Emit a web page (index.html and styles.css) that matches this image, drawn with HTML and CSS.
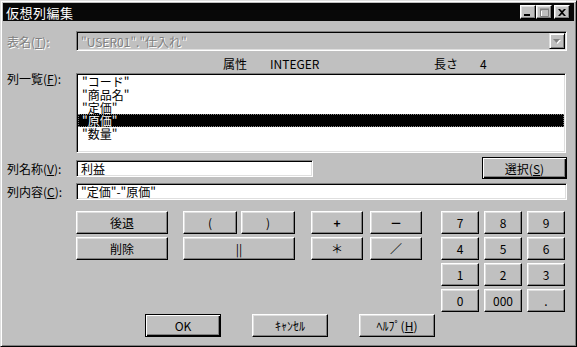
FILE: index.html
```html
<!DOCTYPE html>
<html lang="ja">
<head>
    <meta charset="UTF-8">
    <title>仮想列編集</title>
    <link rel="stylesheet" href="styles.css">
</head>
<body>
    <div class="window">
        <div class="titlebar">
            <span class="title">仮想列編集</span>
            <div class="caption-buttons">
                <span class="cap-btn">
                    <svg width="8" height="7" viewBox="0 0 8 7"><rect x="0" y="5" width="6" height="2" fill="#000"/></svg>
                </span>
                <span class="cap-btn cap-max">
                    <svg width="9" height="9" viewBox="0 0 9 9">
                        <path d="M1.5 2.5 h8 v7 h-8 z" fill="none" stroke="#fff"/>
                        <path d="M0.5 1.5 h8 v7 h-8 z M0 1 h9 v1 h-9z" fill="none" stroke="#808080"/>
                    </svg>
                </span>
                <span class="cap-btn cap-close">
                    <svg width="8" height="7" viewBox="0 0 8 7">
                        <path d="M0 0 h2 l2 2 l2 -2 h2 l-3 3.5 l3 3.5 h-2 l-2 -2 l-2 2 h-2 l3 -3.5 z" fill="#000"/>
                    </svg>
                </span>
            </div>
        </div>

        <div class="content">
            <div class="row row-table">
                <label class="label disabled">表名(<u>T</u>):</label>
                <div class="combo">
                    <span class="combo-text">"USER01"."仕入れ"</span>
                    <span class="combo-btn">
                        <svg width="8" height="5" viewBox="0 0 8 5">
                            <path d="M1 1 h7 l-3.5 4 z" fill="#fff"/>
                            <path d="M0 0 h7 l-3.5 4 z" fill="#808080"/>
                        </svg>
                    </span>
                </div>
            </div>

            <div class="info">
                <span class="info-attr">属性</span>
                <span class="info-type">INTEGER</span>
                <span class="info-len">長さ</span>
                <span>4</span>
            </div>

            <div class="row row-list">
                <label class="label">列一覧(<u>F</u>):</label>
                <ul class="listbox">
                    <li>"コード"</li>
                    <li>"商品名"</li>
                    <li>"定価"</li>
                    <li class="selected">"原価"</li>
                    <li>"数量"</li>
                </ul>
            </div>

            <div class="row row-name">
                <label class="label">列名称(<u>V</u>):</label>
                <div class="field field-name">利益</div>
                <button class="btn btn-default btn-select">選択(<u>S</u>)</button>
            </div>

            <div class="row row-expr">
                <label class="label">列内容(<u>C</u>):</label>
                <div class="field field-expr">"定価"-"原価"</div>
            </div>

            <div class="keys">
                <div class="key-col col-edit">
                    <button class="btn">後退</button>
                    <button class="btn">削除</button>
                </div>
                <div class="key-col col-paren">
                    <div class="key-pair">
                        <button class="btn">(</button>
                        <button class="btn">)</button>
                    </div>
                    <button class="btn">||</button>
                </div>
                <div class="key-col col-ops">
                    <div class="key-pair">
                        <button class="btn btn-op">+</button>
                        <button class="btn btn-op">－</button>
                    </div>
                    <div class="key-pair">
                        <button class="btn">＊</button>
                        <button class="btn">／</button>
                    </div>
                </div>
                <div class="numpad">
                    <button class="btn">7</button>
                    <button class="btn">8</button>
                    <button class="btn">9</button>
                    <button class="btn">4</button>
                    <button class="btn">5</button>
                    <button class="btn">6</button>
                    <button class="btn">1</button>
                    <button class="btn">2</button>
                    <button class="btn">3</button>
                    <button class="btn">0</button>
                    <button class="btn">000</button>
                    <button class="btn">.</button>
                </div>
            </div>

            <div class="actions">
                <button class="btn btn-default">OK</button>
                <button class="btn">ｷｬﾝｾﾙ</button>
                <button class="btn">ﾍﾙﾌﾟ(<u>H</u>)</button>
            </div>
        </div>
    </div>
</body>
</html>
```

FILE: styles.css
```css
* {
    margin: 0;
    padding: 0;
    box-sizing: border-box;
}

body {
    font-family: "Noto Sans CJK JP", "Noto Sans", sans-serif;
    font-size: 12px;
    line-height: 13px;
    color: #000;
    background: #c0c0c0;
}

u {
    text-decoration: underline;
    text-underline-offset: 1px;
}

.window {
    width: 577px;
    height: 347px;
    background: #c0c0c0;
    border: 1px solid;
    border-color: #dfdfdf #000 #000 #dfdfdf;
    box-shadow: inset 1px 1px #fff, inset -1px -1px #808080;
    padding: 2px;
}

/* title bar */
.titlebar {
    height: 18px;
    background: #080808;
    color: #fff;
    display: flex;
    align-items: center;
    padding: 0 4px 0 3px;
}

.title {
    font-size: 13px;
    letter-spacing: 0.5px;
}

.caption-buttons {
    margin-left: auto;
    display: flex;
}

.cap-btn {
    width: 16px;
    height: 14px;
    background: #c0c0c0;
    border: 1px solid;
    border-color: #fff #000 #000 #fff;
    box-shadow: inset -1px -1px #808080, inset 1px 1px #dfdfdf;
    display: flex;
    align-items: center;
    justify-content: center;
}

.cap-close {
    margin-left: 2px;
}

/* form rows */
.content {
    padding: 0 7px 0 4px;
}

.row {
    display: flex;
    align-items: center;
}

.label {
    width: 69px;
    flex-shrink: 0;
    white-space: nowrap;
}

.label.disabled {
    color: #808080;
    text-shadow: 1px 1px #fff;
}

.row-table {
    margin-top: 10px;
}

.combo {
    flex: 1;
    height: 20px;
    display: flex;
    align-items: center;
    border: 1px solid;
    border-color: #808080 #fff #fff #808080;
    box-shadow: inset 1px 1px #000, inset -1px -1px #dfdfdf;
    padding: 1px;
}

.combo-text {
    flex: 1;
    padding-left: 3px;
    color: #808080;
    text-shadow: 1px 1px #fff;
}

.combo-btn {
    width: 16px;
    height: 16px;
    border: 1px solid;
    border-color: #dfdfdf #000 #000 #dfdfdf;
    box-shadow: inset 1px 1px #fff, inset -1px -1px #808080;
    display: flex;
    align-items: center;
    justify-content: center;
}

.info {
    display: flex;
    height: 13px;
    margin: 6px 0 3px 216px;
}

.info-attr {
    width: 47px;
}

.info-type {
    width: 164px;
}

.info-len {
    width: 46px;
}

.row-list {
    align-items: flex-start;
}

.row-list .label {
    margin-top: -1px;
}

.listbox {
    list-style: none;
    width: 490px;
    height: 80px;
    background: #fff;
    border: 1px solid;
    border-color: #808080 #fff #fff #808080;
    box-shadow: inset 1px 1px #000, inset -1px -1px #dfdfdf;
    padding: 1px;
}

.listbox li {
    height: 13px;
    line-height: 13px;
    padding-left: 4px;
}

.listbox li.selected {
    background: #000;
    color: #fff;
    outline: 1px dotted #808080;
    outline-offset: -1px;
}

.row-name {
    margin-top: 4px;
    height: 22px;
}

.row-expr {
    margin-top: 4px;
}

.field {
    height: 17px;
    line-height: 13px;
    background: #fff;
    border: 1px solid;
    border-color: #808080 #fff #fff #808080;
    box-shadow: inset 1px 1px #000, inset -1px -1px #dfdfdf;
    padding: 1px 4px;
}

.field-name {
    width: 237px;
}

.field-expr {
    flex: 1;
}

/* buttons */
.btn {
    font-family: inherit;
    font-size: 12px;
    line-height: 13px;
    color: #000;
    background: #c0c0c0;
    border: 1px solid;
    border-color: #fff #000 #000 #fff;
    box-shadow: inset -1px -1px #808080, inset 1px 1px #dfdfdf;
    height: 23px;
    display: flex;
    align-items: center;
    justify-content: center;
}

.btn-default {
    border-color: #000;
    box-shadow: inset 1px 1px #fff, inset -1px -1px #000, inset -2px -2px #808080;
}

.btn-select {
    margin-left: auto;
    width: 85px;
    height: 22px;
}

.keys {
    display: flex;
    align-items: flex-start;
    margin: 11px 0 0 69px;
}

.key-col {
    display: flex;
    flex-direction: column;
    gap: 3px;
}

.col-edit {
    width: 92px;
}

.col-paren {
    width: 112px;
    margin-left: 15px;
}

.col-ops {
    width: 111px;
    margin-left: 16px;
}

.key-pair {
    display: flex;
    justify-content: space-between;
}

.col-paren .key-pair .btn {
    width: 54px;
}

.col-ops .key-pair .btn {
    width: 52px;
}

.btn-op {
    font-weight: bold;
}

.numpad {
    margin-left: 19px;
    display: grid;
    grid-template-columns: repeat(3, 38px);
    column-gap: 5px;
    row-gap: 3px;
}

.actions {
    display: flex;
    gap: 31px;
    margin: 2px 0 0 138px;
}

.actions .btn {
    width: 76px;
}
```
